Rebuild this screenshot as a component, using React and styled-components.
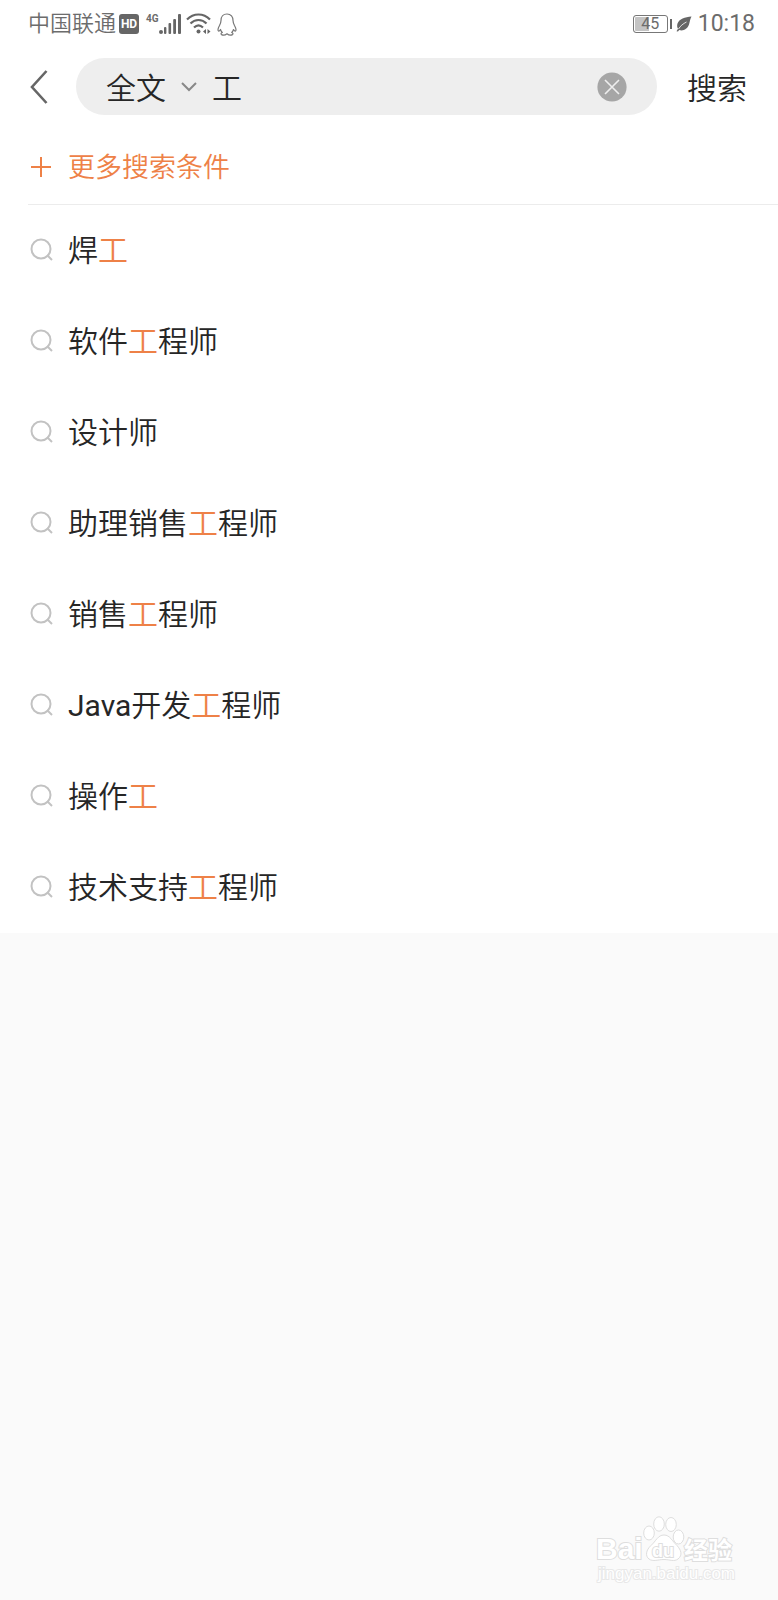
import React, { useState } from 'react';
import styled, { createGlobalStyle } from 'styled-components';

const GlobalStyle = createGlobalStyle`
  * {
    box-sizing: border-box;
  }
  body {
    margin: 0;
    background-color: #fafafa;
    color: #262626;
    font-family: Roboto, "Noto Sans CJK SC", sans-serif;
    font-weight: 350;
  }
  button, input, select {
    margin: 0;
    padding: 0;
    border: none;
    background: none;
    color: inherit;
    font: inherit;
  }
`;

const Page = styled.div`
  display: flex;
  flex-direction: column;
  min-height: 100vh;
`;

const Top = styled.div`
  background-color: #fff;
`;

const StatusBar = styled.div`
  display: flex;
  align-items: center;
  justify-content: space-between;
  height: 48px;
  padding: 0 23px 0 28px;
  color: #6c6c6c;
`;

const StatusGroup = styled.div`
  display: flex;
  align-items: center;
  gap: ${(props) => props.$gap}px;
`;

const Carrier = styled.span`
  font-size: 22px;
  line-height: 24px;
`;

const Clock = styled.span`
  padding-left: 2px;
  font-size: 23px;
  line-height: 24px;
  font-weight: 400;
`;

const HdBadge = styled.span`
  width: 20px;
  border-radius: 3px;
  background-color: #666;
  color: #fff;
  font-size: 12px;
  font-weight: 700;
  line-height: 20px;
  text-align: center;
`;

const Network = styled.div`
  display: flex;
  align-items: flex-start;
  margin: 0 2px 0 4px;
  font-family: Roboto, sans-serif;
  font-size: 10px;
  font-weight: 700;
  line-height: 10px;
`;

const Battery = styled.span`
  display: flex;
  align-items: center;
  &::after {
    content: "";
    width: 2px;
    height: 10px;
    margin-left: 2px;
    background-color: #666;
  }
`;

const BatteryLevel = styled.span`
  width: 35px;
  border: 1px solid #777;
  border-radius: 3px;
  box-shadow: inset 0 0 0 1px #fff;
  background: linear-gradient(to right, #c4c4c4 45%, #fff 45%);
  font-size: 16px;
  font-weight: 400;
  line-height: 16px;
  text-align: center;
`;

const SearchForm = styled.form`
  display: flex;
  align-items: center;
  padding: 10px 31px 17px 30px;
`;

const IconButton = styled.button`
  display: flex;
  cursor: pointer;
`;

const SearchBox = styled.div`
  display: flex;
  flex: 1;
  align-items: center;
  min-width: 0;
  height: 57px;
  margin: 0 30px 0 28px;
  padding: 0 30px;
  border-radius: 29px;
  background-color: #eee;
  font-size: 30px;
`;

const Scope = styled.label`
  display: flex;
  align-items: center;
  gap: 15px;
  margin-right: 15px;
`;

const ScopeSelect = styled.select`
  padding-top: 4px;
  appearance: none;
  outline: none;
`;

const SearchInput = styled.input`
  flex: 1;
  min-width: 0;
  padding-bottom: 2px;
  outline: none;
`;

const SubmitButton = styled.button`
  padding-bottom: 2px;
  font-size: 30px;
  cursor: pointer;
`;

const MoreButton = styled.button`
  display: flex;
  align-items: center;
  gap: 16px;
  width: 100%;
  height: 72px;
  padding: 0 30px 2px;
  color: #ee8147;
  font-size: 27px;
`;

const List = styled.ul`
  margin: 0;
  padding: 0;
  list-style: none;
  &::before {
    content: "";
    display: block;
    height: 1px;
    margin-left: 28px;
    background-color: #ececec;
  }
`;

const Suggestion = styled.a`
  display: flex;
  align-items: center;
  gap: 15px;
  height: 91px;
  padding: 0 30px 2px;
  color: inherit;
  font-size: 30px;
  text-decoration: none;
`;

const Label = styled.span`
  padding-bottom: 3px;
`;

const Highlight = styled.span`
  color: #ee8147;
`;

const Latin = styled.span`
  font-weight: 400;
`;

const Footer = styled.footer`
  display: flex;
  justify-content: flex-end;
  margin-top: auto;
  padding: 30px 38px 12px;
`;

const suggestions = [
  '焊工',
  '软件工程师',
  '设计师',
  '助理销售工程师',
  '销售工程师',
  'Java开发工程师',
  '操作工',
  '技术支持工程师',
];

const SignalIcon = () => (
  <svg width="22" height="20" viewBox="0 0 22 20" fill="#666">
    <circle cx="2" cy="18" r="2" />
    <rect x="5" y="13" width="2.4" height="7" rx="1" />
    <rect x="9.5" y="9" width="2.6" height="11" rx="1" />
    <rect x="14.2" y="5" width="2.8" height="15" rx="1" />
    <rect x="19" y="0" width="3" height="20" rx="1" />
  </svg>
);

const WifiIcon = () => (
  <svg width="25" height="22" viewBox="0 0 25 22" fill="none" stroke="#666" strokeWidth="2.2">
    <path d="M1 6.5C7.5 -0.2 17.5 -0.2 24 6.5" />
    <path d="M4.5 10.5C9 5.8 16 5.8 20.5 10.5" />
    <path d="M8 14.5C10.8 11.8 14.2 11.8 17 14.5" />
    <circle cx="12.5" cy="18.5" r="2" fill="#666" stroke="none" />
    <path d="M20 16V21L17 18.5ZM21.500 16V21L24.500 18.500Z" fill="#666" stroke="none" />
  </svg>
);

const PenguinIcon = () => (
  <svg width="20" height="23" viewBox="0 0 20 23" fill="none" stroke="#777" strokeWidth="1.2" strokeLinejoin="round">
    <path d="M10 1C6 1 4 4 4 7.500C4 9.500 3.500 10.500 2.500 12.500C1 15.300 0.800 17.500 1.500 18C2.200 18.300 3 17.300 3.500 16.500C3.800 17.800 4.400 18.700 5.300 19.500C4 20 3.700 21 4.500 21.600C5.800 22.300 8.500 22 10 20.800C11.500 22 14.200 22.300 15.500 21.600C16.300 21 16 20 14.700 19.500C15.600 18.700 16.200 17.800 16.500 16.500C17 17.300 17.800 18.300 18.500 18C19.200 17.500 19 15.300 17.500 12.500C16.500 10.500 16 9.500 16 7.500C16 4 14 1 10 1Z" />
  </svg>
);

const LeafIcon = () => (
  <svg width="16" height="16" viewBox="0 0 16 16">
    <path d="M15.5 0.5C9 1 3 3 1.5 7.5C0.8 9.800 1.200 11.500 2 12.800L0.500 15.200L2 15.500L3.200 14C7 15.500 11.500 13 13 8.500C14 5.500 14 3 15.500 0.500Z" fill="#666" />
    <path d="M2.500 13C4.500 9.800 7 7.800 10.500 6" fill="none" stroke="#fff" strokeWidth="0.8" />
  </svg>
);

const BackIcon = () => (
  <svg width="18" height="34" viewBox="0 0 18 34" fill="none" stroke="#666" strokeWidth="2.6">
    <path d="M16.500 1L2 17L16.500 33" />
  </svg>
);

const ChevronIcon = () => (
  <svg width="16" height="10" viewBox="0 0 16 10" fill="none" stroke="#888" strokeWidth="2">
    <path d="M1 1L8 8L15 1" />
  </svg>
);

const ClearIcon = () => (
  <svg width="30" height="30" viewBox="0 0 30 30">
    <circle cx="15" cy="15" r="14.6" fill="#a6a6a6" />
    <path d="M8 8L22 22M22 8L8 22" stroke="#eee" strokeWidth="1.600" />
  </svg>
);

const PlusIcon = () => (
  <svg width="22" height="22" viewBox="0 0 22 22" stroke="#ee8147" strokeWidth="2">
    <path d="M11 1V21M1 11H21" />
  </svg>
);

const SearchIcon = () => (
  <svg width="23" height="23" viewBox="0 0 23 23" fill="none" stroke="#c2c2c2" strokeWidth="2">
    <circle cx="11" cy="11" r="9.5" />
    <path d="M17 17L22 22" />
  </svg>
);

const Watermark = () => (
  <svg width="144" height="72" viewBox="0 0 144 72" fill="#fff" stroke="#dedede" strokeWidth="1">
    <ellipse cx="53" cy="17" rx="5.300" ry="7" />
    <ellipse cx="63" cy="8" rx="5.300" ry="7.200" />
    <ellipse cx="75" cy="8.500" rx="5.300" ry="7" />
    <ellipse cx="82.500" cy="21" rx="5.300" ry="7" />
    <path d="M68 19C62 19 60 25 55 29.500C50 34 49 40 53 43C57 46 62 43.500 68 43.500C74 43.500 78 46 82 43C87 39 85 34 81 29.500C76 25 74 19 68 19Z" />
    <g fontFamily="Liberation Sans, Noto Sans CJK SC, sans-serif" fontWeight="700" strokeWidth="2" paintOrder="stroke">
      <text x="0" y="43" fontSize="30">Bai</text>
      <text x="56" y="41" fontSize="18">du</text>
      <text x="88" y="43" fontSize="24">经验</text>
    </g>
    <text x="2" y="63" fontFamily="Liberation Sans, sans-serif" fontSize="17" stroke="#e8e8e8" strokeWidth="2" paintOrder="stroke">
      jingyan.baidu.com
    </text>
  </svg>
);

const SuggestionText = ({ text, keyword }) => {
  // the Latin prefix is set a little heavier than the Chinese text
  const latin = text.match(/^[A-Za-z]*/)[0];
  const name = text.slice(latin.length);
  const [before, ...rest] = keyword ? name.split(keyword) : [name];
  return (
    <Label>
      {latin && <Latin>{latin}</Latin>}
      {before}
      {rest.length > 0 && <Highlight>{keyword}</Highlight>}
      {rest.join(keyword)}
    </Label>
  );
};

const SearchPage = () => {
  const [keyword, setKeyword] = useState('工');

  return (
    <Page>
      <Top>
        <StatusBar>
          <StatusGroup $gap={3}>
            <Carrier>中国联通</Carrier>
            <HdBadge>HD</HdBadge>
            <Network>
              4G
              <SignalIcon />
            </Network>
            <StatusGroup $gap={6}>
              <WifiIcon />
              <PenguinIcon />
            </StatusGroup>
          </StatusGroup>
          <StatusGroup $gap={4}>
            <Battery>
              <BatteryLevel>45</BatteryLevel>
            </Battery>
            <LeafIcon />
            <Clock>10:18</Clock>
          </StatusGroup>
        </StatusBar>

        <SearchForm onSubmit={(e) => e.preventDefault()}>
          <IconButton type="button" aria-label="返回">
            <BackIcon />
          </IconButton>
          <SearchBox>
            <Scope>
              <ScopeSelect aria-label="搜索范围">
                <option>全文</option>
              </ScopeSelect>
              <ChevronIcon />
            </Scope>
            <SearchInput
              type="text"
              aria-label="关键词"
              value={keyword}
              onChange={(e) => setKeyword(e.target.value)}
            />
            <IconButton type="button" aria-label="清除" onClick={() => setKeyword('')}>
              <ClearIcon />
            </IconButton>
          </SearchBox>
          <SubmitButton type="submit">搜索</SubmitButton>
        </SearchForm>

        <MoreButton type="button">
          <PlusIcon />
          <Label>更多搜索条件</Label>
        </MoreButton>

        <List>
          {suggestions.map((text) => (
            <li key={text}>
              <Suggestion href="#">
                <SearchIcon />
                <SuggestionText text={text} keyword={keyword} />
              </Suggestion>
            </li>
          ))}
        </List>
      </Top>

      <Footer>
        <Watermark />
      </Footer>
    </Page>
  );
};

const App = () => (
  <>
    <GlobalStyle />
    <SearchPage />
  </>
);

export default App;
